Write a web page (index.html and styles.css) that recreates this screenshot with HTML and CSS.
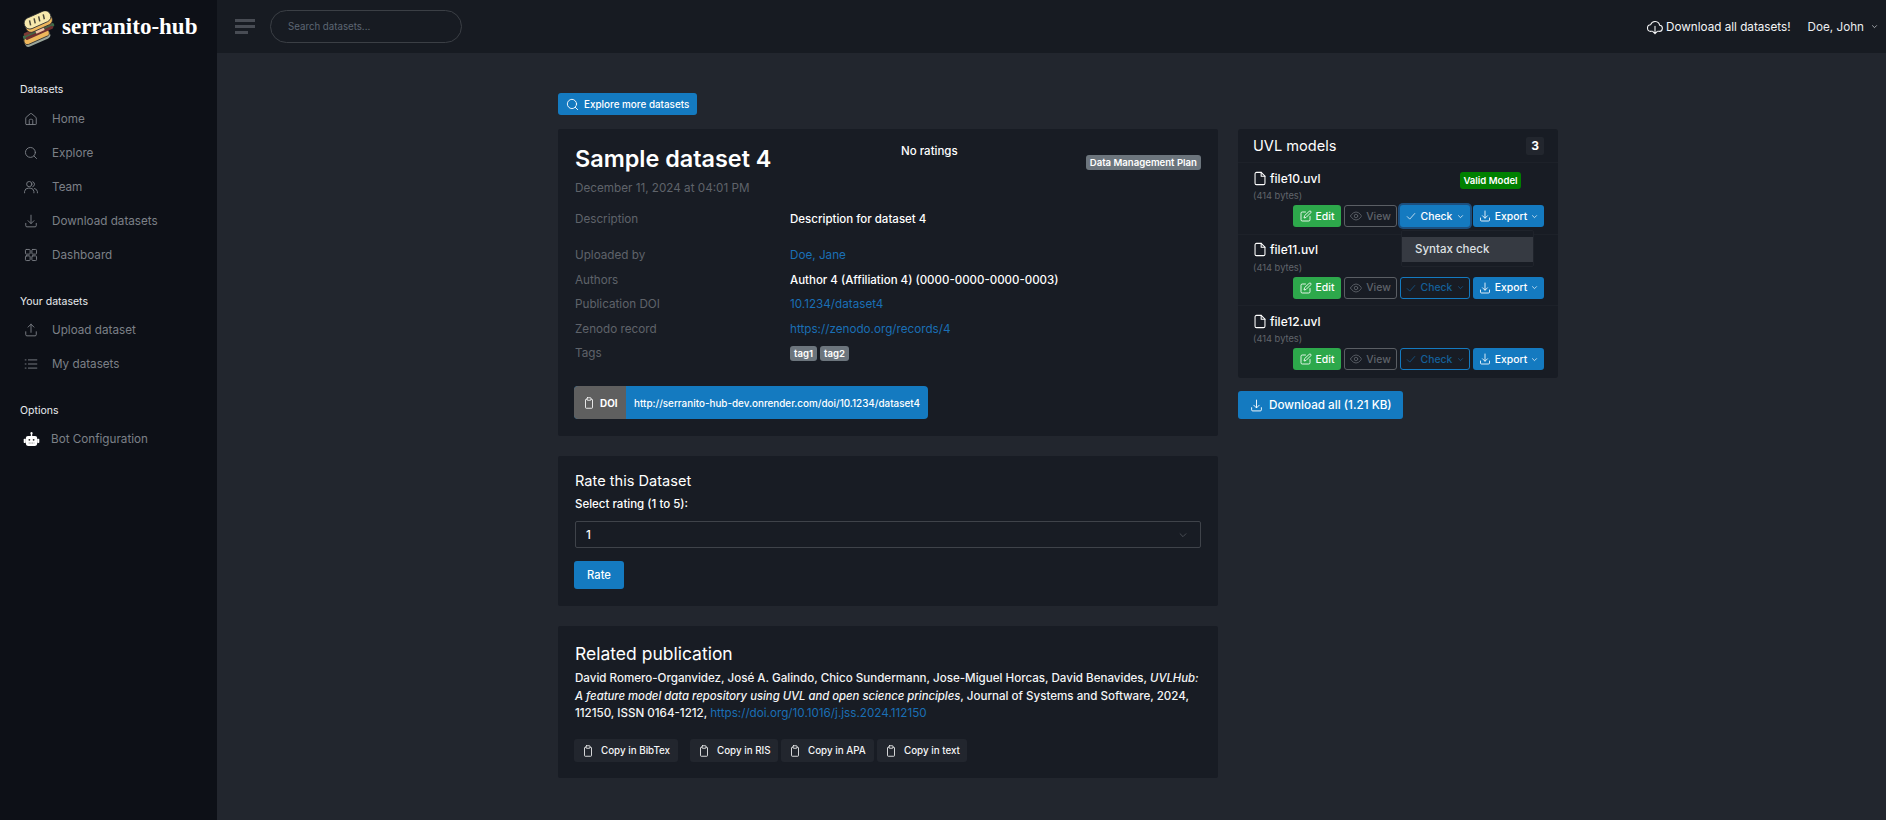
FILE: index.html
```html
<!DOCTYPE html>
<html lang="en">
<head>
<meta charset="utf-8">
<title>serranito-hub</title>
<link rel="stylesheet" href="styles.css">
</head>
<body>
<svg class="defs" width="0" height="0" aria-hidden="true">
  <defs>
    <symbol id="i-search" viewBox="0 0 24 24"><circle cx="11" cy="11" r="8.5"/><path d="M21.5 21.5 17.2 17.2"/></symbol>
    <symbol id="i-home" viewBox="0 0 24 24"><path d="M4 21.500h16a1 1 0 0 0 1-1V10.500a2 2 0 0 0-.7-1.500l-7-6a2 2 0 0 0-2.600 0l-7 6A2 2 0 0 0 3 10.500v10a1 1 0 0 0 1 1z"/><path d="M9 21.500v-7a2 2 0 0 1 2-2h2a2 2 0 0 1 2 2v7"/></symbol>
    <symbol id="i-users" viewBox="0 0 24 24"><circle cx="9" cy="7" r="4.500"/><path d="M1 22v-2.500A6.500 6.500 0 0 1 7.500 14h3a6.500 6.500 0 0 1 6.500 5.500V22"/><path d="M15 3a4.500 4.500 0 0 1 0 8.500"/><path d="M18 14.500a6.500 6.500 0 0 1 5 5.500v2"/></symbol>
    <symbol id="i-download" viewBox="0 0 24 24"><path d="M3 16v4a2 2 0 0 0 2 2h14a2 2 0 0 0 2-2v-4"/><path d="M12 2v14"/><path d="m7 11.500 5 5 5-5"/></symbol>
    <symbol id="i-upload" viewBox="0 0 24 24"><path d="M3 15v5a2 2 0 0 0 2 2h14a2 2 0 0 0 2-2v-5"/><path d="M12 16V2"/><path d="m7 7 5-5 5 5"/></symbol>
    <symbol id="i-grid" viewBox="0 0 24 24"><rect x="2.500" y="2.500" width="8" height="8" rx="1.500"/><rect x="13.500" y="2.500" width="8" height="8" rx="1.500"/><rect x="2.500" y="13.500" width="8" height="8" rx="1.500"/><rect x="13.500" y="13.500" width="8" height="8" rx="1.500"/></symbol>
    <symbol id="i-list" viewBox="0 0 24 24"><path d="M7.500 5H22M7.500 12H22M7.500 19H22M2 5h1.500M2 12h1.500M2 19h1.500"/></symbol>
    <symbol id="i-clip" viewBox="0 0 24 24"><path d="M8 4.500H6.500A1.500 1.500 0 0 0 5 6v15a1.500 1.500 0 0 0 1.500 1.500h11A1.500 1.500 0 0 0 19 21V6a1.500 1.500 0 0 0-1.500-1.500H16"/><rect x="8" y="1.500" width="8" height="5" rx="1"/></symbol>
    <symbol id="i-file" viewBox="0 0 24 24"><path d="M14 1.500H6A2.500 2.500 0 0 0 3.500 4v16A2.500 2.500 0 0 0 6 22.500h12a2.500 2.500 0 0 0 2.500-2.500V8z"/><path d="M14 1.500V8h6.500"/></symbol>
    <symbol id="i-edit" viewBox="0 0 24 24"><path d="M11 4H4.500A2.500 2.500 0 0 0 2 6.500v13A2.500 2.500 0 0 0 4.500 22h13a2.500 2.500 0 0 0 2.500-2.500V13"/><path d="M18.500 2.500a2.100 2.100 0 0 1 3 3L12 15l-4 1 1-4z"/></symbol>
    <symbol id="i-eye" viewBox="0 0 24 24"><path d="M1 12s4-8 11-8 11 8 11 8-4 8-11 8-11-8-11-8z"/><circle cx="12" cy="12" r="3.500"/></symbol>
    <symbol id="i-check" viewBox="0 0 24 24"><path d="M3 13.500 9 19.500 21 6"/></symbol>
    <symbol id="i-chev" viewBox="0 0 24 24"><path d="m5 9 7 7 7-7"/></symbol>
    <symbol id="i-cloud" viewBox="0 0 24 24"><path d="M7.500 18.500H6a5 5 0 0 1-.5-10A7 7 0 0 1 19 9.500a4.500 4.500 0 0 1-1 9h-1.500"/><path d="M12 11v11M8.500 18.500 12 22l3.500-3.500"/></symbol>
  </defs>
</svg>

<div class="app">
  <aside class="sidebar">
    <a class="brand">
      <svg class="brand-logo" viewBox="0 0 37 36" aria-hidden="true">
        <g transform="rotate(-24 16 28)">
          <rect x="3" y="24" width="27" height="8" rx="3.500" fill="#9aa59a"/>
          <rect x="3" y="22.500" width="27" height="7" rx="3" fill="#eeb75c" stroke="#2a2d30" stroke-width=".8"/>
        </g>
        <g transform="rotate(-24 18 21)">
          <rect x="1" y="18" width="34" height="4" rx="2" fill="#3f6b4a"/>
          <rect x="3" y="20.500" width="30" height="3" rx="1.500" fill="#6e2f2f"/>
          <rect x="3" y="16" width="30" height="3" rx="1.500" fill="#7a3a34"/>
          <rect x="15" y="16.500" width="9" height="5" fill="#eec3a3"/>
        </g>
        <g transform="rotate(-24 17 10)">
          <rect x="3" y="7" width="28" height="11" rx="5" fill="#eeb75c" stroke="#2a2d30" stroke-width=".8"/>
          <rect x="3" y="3" width="28" height="11.500" rx="5.500" fill="#f7e9ad" stroke="#2a2d30" stroke-width=".8"/>
          <path d="M9.500 6l-1 5M14.500 6l-1 5M19.500 6l-1 5M24.500 6l-1 5" stroke="#4d4a3a" stroke-width="1.500" fill="none"/>
        </g>
      </svg>
      <span class="brand-text">serranito-hub</span>
    </a>

    <div class="nav-header nav-first">Datasets</div>
    <a class="nav-link"><svg class="ic nav-ic"><use href="#i-home"/></svg>Home</a>
    <a class="nav-link"><svg class="ic nav-ic"><use href="#i-search"/></svg>Explore</a>
    <a class="nav-link"><svg class="ic nav-ic"><use href="#i-users"/></svg>Team</a>
    <a class="nav-link"><svg class="ic nav-ic"><use href="#i-download"/></svg>Download datasets</a>
    <a class="nav-link"><svg class="ic nav-ic"><use href="#i-grid"/></svg>Dashboard</a>

    <div class="nav-header">Your datasets</div>
    <a class="nav-link"><svg class="ic nav-ic"><use href="#i-upload"/></svg>Upload dataset</a>
    <a class="nav-link"><svg class="ic nav-ic"><use href="#i-list"/></svg>My datasets</a>

    <div class="nav-header">Options</div>
    <a class="nav-link"><svg class="nav-ic bot" viewBox="0 0 24 24" aria-hidden="true">
      <rect x="4" y="7" width="16" height="14" rx="3" fill="#fff"/>
      <rect x="1" y="11" width="3" height="6" rx="1" fill="#fff"/>
      <rect x="20" y="11" width="3" height="6" rx="1" fill="#fff"/>
      <rect x="11" y="3" width="2" height="4" fill="#fff"/>
      <circle cx="12" cy="3" r="1.500" fill="#fff"/>
      <circle cx="9" cy="12.500" r="1.300" fill="#222"/>
      <circle cx="15" cy="12.500" r="1.300" fill="#222"/>
      <path d="M8 17h8" stroke="#555" stroke-width="1" stroke-dasharray="1.500 1"/>
    </svg>Bot Configuration</a>
  </aside>

  <div class="main">
    <header class="topbar">
      <div class="burger"><i></i><i></i><i class="short"></i></div>
      <div class="search">Search datasets...</div>
      <div class="top-right">
        <a class="top-dl"><svg class="ic top-cloud"><use href="#i-cloud"/></svg>Download all datasets!</a>
        <a class="top-user">Doe, John<svg class="ic top-chev"><use href="#i-chev"/></svg></a>
      </div>
    </header>

    <main class="content">
      <a class="btn btn-blue explore"><svg class="ic ic-13"><use href="#i-search"/></svg>Explore more datasets</a>

      <div class="cols">
        <div class="col-left">
          <section class="card card-info">
            <div class="title-row">
              <h1 class="ds-title">Sample dataset 4</h1>
              <span class="ratings">No ratings</span>
              <span class="badge badge-grey dmp">Data Management Plan</span>
            </div>
            <p class="date">December 11, 2024 at 04:01 PM</p>
            <dl class="meta meta-desc">
              <dt>Description</dt><dd>Description for dataset 4</dd>
            </dl>
            <dl class="meta">
              <dt>Uploaded by</dt><dd><a class="link">Doe, Jane</a></dd>
              <dt>Authors</dt><dd>Author 4 (Affiliation 4) (0000-0000-0000-0003)</dd>
              <dt>Publication DOI</dt><dd><a class="link">10.1234/dataset4</a></dd>
              <dt>Zenodo record</dt><dd><a class="link">https://zenodo.org/records/4</a></dd>
              <dt>Tags</dt><dd class="tags"><span class="badge badge-grey">tag1</span><span class="badge badge-grey">tag2</span></dd>
            </dl>
            <div class="doi">
              <span class="doi-label"><svg class="ic ic-12"><use href="#i-clip"/></svg>DOI</span>
              <span class="doi-url">http://serranito-hub-dev.onrender.com/doi/10.1234/dataset4</span>
            </div>
          </section>

          <section class="card card-rate">
            <h2 class="card-h">Rate this Dataset</h2>
            <label class="rate-label">Select rating (1 to 5):</label>
            <div class="select">1<svg class="ic select-chev"><use href="#i-chev"/></svg></div>
            <a class="btn btn-blue rate-btn">Rate</a>
          </section>

          <section class="card card-pub">
            <h2 class="pub-h">Related publication</h2>
            <p class="cite">David Romero-Organvidez, José A. Galindo, Chico Sundermann, Jose-Miguel Horcas, David Benavides, <em>UVLHub: A feature model data repository using UVL and open science principles</em>, Journal of Systems and Software, 2024, 112150, ISSN 0164-1212, <a class="link">https://doi.org/10.1016/j.jss.2024.112150</a></p>
            <div class="copy-row">
              <a class="copy copy-bib"><svg class="ic ic-12"><use href="#i-clip"/></svg>Copy in BibTex</a>
              <a class="copy copy-ris"><svg class="ic ic-12"><use href="#i-clip"/></svg>Copy in RIS</a>
              <a class="copy copy-apa"><svg class="ic ic-12"><use href="#i-clip"/></svg>Copy in APA</a>
              <a class="copy copy-txt"><svg class="ic ic-12"><use href="#i-clip"/></svg>Copy in text</a>
            </div>
          </section>
        </div>

        <div class="col-right">
          <section class="card card-uvl">
            <div class="uvl-head"><h2 class="card-h">UVL models</h2><span class="count">3</span></div>

            <div class="file">
              <div class="file-top">
                <span class="file-name"><svg class="ic file-ic"><use href="#i-file"/></svg>file10.uvl</span>
                <span class="badge badge-green">Valid Model</span>
              </div>
              <div class="file-size">(414 bytes)</div>
              <div class="file-btns">
                <a class="mini mini-green"><svg class="ic ic-m"><use href="#i-edit"/></svg>Edit</a>
                <a class="mini mini-ghost"><svg class="ic ic-m"><use href="#i-eye"/></svg>View</a>
                <div class="drop">
                  <a class="mini mini-active"><svg class="ic ic-11"><use href="#i-check"/></svg>Check<svg class="ic ic-9"><use href="#i-chev"/></svg></a>
                  <div class="menu"><div class="menu-item">Syntax check</div></div>
                </div>
                <a class="mini mini-blue"><svg class="ic ic-m"><use href="#i-download"/></svg>Export<svg class="ic ic-9"><use href="#i-chev"/></svg></a>
              </div>
            </div>

            <div class="file">
              <div class="file-top"><span class="file-name"><svg class="ic file-ic"><use href="#i-file"/></svg>file11.uvl</span></div>
              <div class="file-size">(414 bytes)</div>
              <div class="file-btns">
                <a class="mini mini-green"><svg class="ic ic-m"><use href="#i-edit"/></svg>Edit</a>
                <a class="mini mini-ghost"><svg class="ic ic-m"><use href="#i-eye"/></svg>View</a>
                <a class="mini mini-outline"><svg class="ic ic-11"><use href="#i-check"/></svg>Check<svg class="ic ic-9"><use href="#i-chev"/></svg></a>
                <a class="mini mini-blue"><svg class="ic ic-m"><use href="#i-download"/></svg>Export<svg class="ic ic-9"><use href="#i-chev"/></svg></a>
              </div>
            </div>

            <div class="file">
              <div class="file-top"><span class="file-name"><svg class="ic file-ic"><use href="#i-file"/></svg>file12.uvl</span></div>
              <div class="file-size">(414 bytes)</div>
              <div class="file-btns">
                <a class="mini mini-green"><svg class="ic ic-m"><use href="#i-edit"/></svg>Edit</a>
                <a class="mini mini-ghost"><svg class="ic ic-m"><use href="#i-eye"/></svg>View</a>
                <a class="mini mini-outline"><svg class="ic ic-11"><use href="#i-check"/></svg>Check<svg class="ic ic-9"><use href="#i-chev"/></svg></a>
                <a class="mini mini-blue"><svg class="ic ic-m"><use href="#i-download"/></svg>Export<svg class="ic ic-9"><use href="#i-chev"/></svg></a>
              </div>
            </div>
          </section>

          <a class="btn btn-blue dl-all"><svg class="ic ic-13"><use href="#i-download"/></svg>Download all (1.21 KB)</a>
        </div>
      </div>
    </main>
  </div>
</div>
</body>
</html>
```

FILE: styles.css
```css
* { box-sizing: border-box; }
html, body { margin: 0; height: 100%; }
body {
  font-family: Inter, "Liberation Sans", sans-serif;
  font-size: 12px;
  color: #fff;
  background: #22262e;
  overflow: hidden;
}
.defs { position: absolute; }
h1, h2, p, dl, dd, dt { margin: 0; }
.ic {
  fill: none;
  stroke: currentColor;
  stroke-width: 1.7;
  stroke-linecap: round;
  stroke-linejoin: round;
  flex: none;
  width: 14px;
  height: 14px;
}
.ic-13 { width: 13px; height: 13px; }
.ic-12 { width: 12px; height: 14px; }
.ic-m { width: 12px; height: 12px; }
.ic-11 { width: 10px; height: 10px; }
.ic-9 { width: 7px; height: 7px; stroke-width: 2.4; }

.app { display: flex; height: 820px; }

/* sidebar */
.sidebar {
  width: 217px;
  flex: none;
  background: #0d1017;
  padding: 0 20px;
}
.brand { display: flex; align-items: center; height: 53px; padding-top: 5px; white-space: nowrap; }
.brand-logo { width: 37px; height: 36px; flex: none; margin-left: 1px; margin-right: 4px; }
.brand-text {
  font-family: "Liberation Serif", serif;
  font-weight: 700;
  font-size: 23px;
  color: #fff;
  position: relative;
  top: -2px;
}
.nav-header {
  font-size: 10.5px;
  line-height: 14px;
  color: #e9ecef;
  margin-top: 23px;
  margin-bottom: 4px;
}
.nav-first { margin-top: 30px; margin-bottom: 5px; }
.nav-link {
  display: flex;
  align-items: center;
  height: 34px;
  font-size: 11.7px;
  color: #7c8087;
}
.nav-ic { width: 14px; height: 14px; margin: 0 14px 0 4px; color: #7c8087; stroke-width: 1.6; }
.bot { width: 17px; height: 17px; margin: 0 11px 0 3px; }

/* topbar */
.main { flex: 1; min-width: 0; }
.topbar {
  height: 53px;
  background: #171b22;
  display: flex;
  align-items: center;
  padding-left: 18px;
}
.burger { display: flex; flex-direction: column; gap: 3px; width: 20px; margin-right: 15px; }
.burger i { display: block; height: 3px; background: #484c54; }
.burger .short { width: 13px; }
.search {
  width: 192px;
  height: 33px;
  border: 1px solid #3b3f45;
  border-radius: 17px;
  padding-left: 17px;
  line-height: 31px;
  font-size: 9.7px;
  color: #5d6673;
}
.top-right {
  margin-left: auto;
  display: flex;
  align-items: center;
  padding-right: 8px;
  font-size: 11.7px;
  color: #e9ecef;
}
.top-dl { display: flex; align-items: center; gap: 3px; color: #f4f5f6; }
.top-cloud { width: 16px; height: 16px; stroke-width: 1.6; }
.top-user { display: flex; align-items: center; margin-left: 17px; }
.top-chev { width: 7px; height: 7px; margin-left: 7px; stroke-width: 2.2; }

/* content */
.content { padding: 40px 0 0 341px; }
.btn {
  display: inline-flex;
  align-items: center;
  background: #147ac0;
  border-radius: 3px;
  color: #fff;
}
.explore {
  width: 139px;
  height: 22px;
  padding-left: 8px;
  gap: 5px;
  font-size: 9.9px;
  font-weight: 500;
}
.cols { display: grid; grid-template-columns: 660px 320px; column-gap: 20px; margin-top: 14px; align-items: start; }
.col-left { display: flex; flex-direction: column; gap: 20px; }
.card { background: #181c24; border-radius: 2px; }

/* info card */
.card-info { height: 307px; padding: 15px 17px 0 17px; }
.title-row { display: flex; height: 29px; align-items: flex-start; }
.ds-title { font-size: 23.4px; line-height: 29px; font-weight: 600; width: 326px; white-space: nowrap; }
.ratings { font-size: 11.5px; line-height: 14px; font-weight: 500; }
.badge {
  display: inline-block;
  font-weight: 600;
  font-size: 9.6px;
  line-height: 11px;
  padding: 2px 4px;
  border-radius: 3px;
  color: #fff;
  white-space: nowrap;
}
.badge-grey { background: #6c757d; }
.dmp { margin-left: auto; margin-top: 11px; height: 15px; }
.date { font-size: 11.7px; line-height: 14px; color: #5f636a; margin-top: 8px; }
.meta {
  display: grid;
  grid-template-columns: 215px 1fr;
  font-size: 11.7px;
  line-height: 24.4px;
  font-weight: 400;
}
.meta dt { color: #5f636a; }
.meta dd { color: #fff; font-size: 11.5px; font-weight: 500; }
.meta-desc { margin-top: 12px; }
.meta-desc + .meta { margin-top: 12px; }
.meta dd .link { color: #1a6fb5; font-weight: 400; font-size: 11.7px; }
.link { color: #1a6fb5; font-weight: 400; }
.tags { display: flex; gap: 3px; align-items: center; }
.doi {
  display: flex;
  width: 354px;
  height: 33px;
  margin-top: 21px;
  margin-left: -1px;
  border-radius: 4px;
  overflow: hidden;
  background: #147ac0;
  font-size: 9.9px;
  font-weight: 500;
  align-items: stretch;
}
.doi-label {
  width: 52px;
  background: #5f5f5f;
  display: flex;
  align-items: center;
  gap: 5px;
  padding-left: 9px;
  font-weight: 700;
}
.doi-url { padding-left: 8px; display: flex; align-items: center; white-space: nowrap; }

/* rate card */
.card-rate { height: 150px; padding: 15px 17px 0 17px; }
.card-h { font-size: 14.6px; line-height: 20px; font-weight: 400; }
.rate-label { display: block; margin-top: 5px; font-size: 11.5px; line-height: 16px; font-weight: 500; }
.select {
  display: flex;
  align-items: center;
  justify-content: space-between;
  height: 27px;
  margin-top: 9px;
  padding: 0 12px 0 10px;
  border: 1px solid #3f434a;
  border-radius: 2px;
  font-size: 11.7px;
  font-weight: 500;
}
.select-chev { width: 10px; height: 10px; color: #5a5f66; }
.rate-btn {
  width: 50px;
  height: 28px;
  margin-top: 13px;
  margin-left: -1px;
  justify-content: center;
  font-size: 11.2px;
  font-weight: 500;
}

/* publication */
.card-pub { height: 152px; padding: 17px 17px 0 17px; }
.pub-h { font-size: 17.5px; line-height: 22px; font-weight: 400; }
.cite { font-size: 11.58px; line-height: 17.7px; font-weight: 500; margin-top: 5px; color: #f4f5f6; }
.cite em { font-size: 11.3px; }
.cite .link { font-size: 11.7px; }
.copy-row { display: flex; margin-top: 16px; margin-left: -1px; }
.copy {
  display: flex;
  align-items: center;
  gap: 7px;
  height: 23px;
  padding-left: 8px;
  background: #22262e;
  border-radius: 3px;
  font-size: 9.8px;
  font-weight: 500;
  color: #f4f5f6;
}
.copy-bib { width: 104px; margin-right: 12px; }
.copy-ris { width: 88px; margin-right: 3px; }
.copy-apa { width: 93px; margin-right: 3px; }
.copy-txt { width: 90px; }

/* uvl card */
.card-uvl { height: 249px; border-radius: 3px; }
.uvl-head {
  height: 34px;
  display: flex;
  align-items: center;
  justify-content: space-between;
  padding: 0 14px 0 15px;
  border-bottom: 1px solid #1d2129;
}
.count {
  width: 18px;
  height: 18px;
  background: #22262e;
  border-radius: 2px;
  text-align: center;
  font-size: 12px;
  line-height: 18px;
  font-weight: 700;
}
.file { height: 71.7px; padding: 6px 14px 0 15px; border-bottom: 1px solid #1d2129; }
.file:last-child { border-bottom: 0; }
.file-top { display: flex; align-items: center; height: 18px; }
.file-name { display: flex; align-items: center; gap: 3px; font-size: 12px; font-weight: 500; }
.file-ic { width: 14px; height: 15px; stroke-width: 1.8; }
.badge-green {
  background: #008000;
  margin-left: auto;
  margin-right: 23px;
  margin-top: 4px;
  height: 17px;
  font-size: 9.6px;
  line-height: 13px;
  padding: 2px 0;
  width: 61px;
  text-align: center;
}
.file-size { font-size: 9.3px; line-height: 12px; color: #61656b; margin-top: 3px; }
.file-btns { display: flex; justify-content: flex-end; gap: 3px; margin-top: 3px; }
.mini {
  display: flex;
  align-items: center;
  justify-content: center;
  height: 22px;
  border-radius: 3px;
  font-size: 10.4px;
  font-weight: 500;
  gap: 4px;
}
.mini-green { width: 48px; background: #2da84b; }
.mini-ghost { width: 53px; border: 1px solid #5a5e64; color: #5f636a; }
.mini-outline { width: 70px; border: 1px solid #147ac0; color: #14609a; gap: 5px; }
.mini-active { width: 70px; background: #147ac0; color: #fff; gap: 5px; box-shadow: 0 0 0 2px #1c4f7f; }
.mini-blue { width: 71px; background: #147ac0; }
.drop { position: relative; }
.menu {
  position: absolute;
  top: 25px;
  left: 1px;
  width: 133px;
  height: 37px;
  padding-top: 6px;
  background: #181c24;
  border: 1px solid #1f232b;
  border-radius: 2px;
  z-index: 5;
}
.menu-item {
  height: 25px;
  background: #363a42;
  padding-left: 13px;
  font-size: 11.5px;
  line-height: 25px;
  font-weight: 500;
  color: #dfe1e4;
}
.dl-all {
  width: 165px;
  height: 28px;
  margin-top: 13px;
  padding-left: 12px;
  gap: 6px;
  font-size: 11.7px;
  font-weight: 500;
  border-radius: 3px;
}
```
